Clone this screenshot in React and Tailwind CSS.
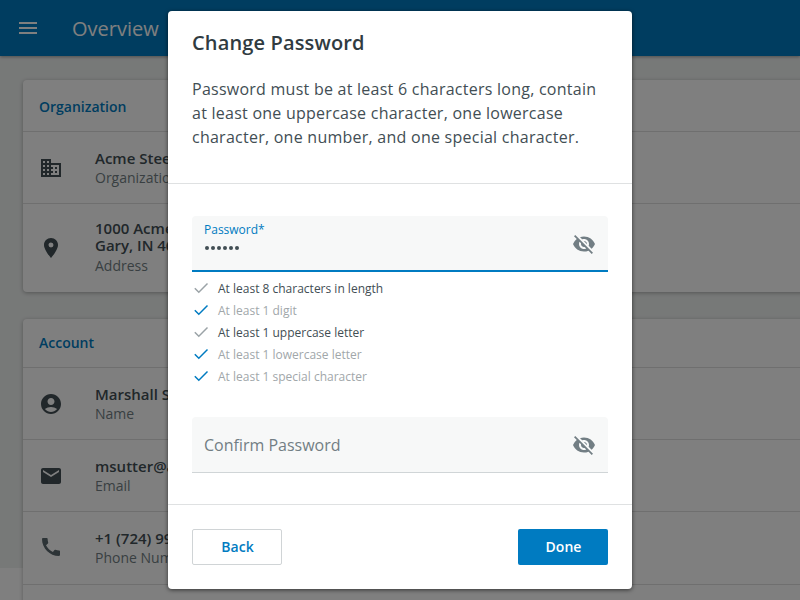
import React from "react";
import {
  MdMenu,
  MdDomain,
  MdPlace,
  MdAccountCircle,
  MdEmail,
  MdCall,
  MdVisibilityOff,
} from "react-icons/md";

function InfoRow({ icon: Icon, title, label, height, iconClass = "text-[#424e54]" }) {
  return (
    <div className={`flex shrink-0 items-center border-b border-[#dfdfdf] pl-4 ${height}`}>
      <Icon className={`size-6 shrink-0 ${iconClass}`} />
      <div className="ml-8 pt-[3px] whitespace-pre">
        <div className="mb-[2px] text-[15px] leading-4 font-semibold text-[#424e54]">{title}</div>
        <div className="text-[14px] leading-5 text-[#727e84]">{label}</div>
      </div>
    </div>
  );
}

function CardTitle({ children, height }) {
  return (
    <div className={`flex items-center border-b border-[#dfdfdf] pl-4 text-[14px] font-semibold text-[#007bc1] ${height}`}>
      {children}
    </div>
  );
}

function Tick({ met }) {
  return (
    <svg
      viewBox="0 0 18 18"
      fill="none"
      strokeWidth="1.5"
      className={`mb-[2px] size-[18px] shrink-0 ${met ? "stroke-[#007bc1]" : "stroke-[#9ba3a7]"}`}
    >
      <path d="M2.8 9.2 6.8 13.2 15.5 4.5" />
    </svg>
  );
}

const rules = [
  { text: "At least 8 characters in length", met: false },
  { text: "At least 1 digit", met: true },
  { text: "At least 1 uppercase letter", met: false },
  { text: "At least 1 lowercase letter", met: true },
  { text: "At least 1 special character", met: true },
];

function AccountPage() {
  return (
    <div className="h-[600px] overflow-hidden bg-white">
      <div className="h-[568px] bg-[#eff2f1]">
        <header className="relative flex h-14 items-center bg-[#007bc1] pl-4 text-white shadow-[0_1px_3px_rgba(0,0,0,0.35)]">
          <MdMenu className="size-6" />
          <h1 className="ml-8 pt-[2px] text-[20px] leading-7">Overview</h1>
        </header>
        <main className="flex flex-col gap-[27px] pt-6 pl-[23px]">
          <section className="h-[212px] w-[800px] overflow-visible rounded bg-white shadow-[0_1px_4px_rgba(0,0,0,0.3)]">
            <CardTitle height="h-[52px] pt-[2px]">Organization</CardTitle>
            <InfoRow icon={MdDomain} title="Acme Steel Company" label="Organization Name" height="h-[72px]" />
            <div className="flex h-[88px] items-center pl-4">
              <MdPlace className="size-6 shrink-0 text-[#424e54]" />
              <div className="ml-8">
                <div className="text-[15px] leading-[17px] font-semibold text-[#424e54]">
                  1000 Acme Way
                  <br />
                  Gary, IN 46402
                </div>
                <div className="mt-[2px] text-[14px] leading-5 text-[#727e84]">Address</div>
              </div>
            </div>
          </section>
          <section className="w-[800px] rounded bg-white shadow-[0_1px_4px_rgba(0,0,0,0.3)]">
            <CardTitle height="h-[49px] pb-[2px]">Account</CardTitle>
            <InfoRow icon={MdAccountCircle} title="Marshall Sutter" label="Name" height="h-[72px]" />
            <InfoRow icon={MdEmail} title="msutter@acme.com" label="Email" height="h-[72px]" />
            <InfoRow
              icon={MdCall}
              title="+1 (724) 999-0123"
              label="Phone Number"
              height="h-[73px] pb-[1px]"
              iconClass="mb-[2px] text-[#5b686e]"
            />
            <div className="h-10" />
          </section>
        </main>
      </div>
    </div>
  );
}

function PasswordDialog() {
  return (
    <div role="dialog" className="mt-[11px] flex h-[578px] w-[464px] flex-col rounded bg-white shadow-[0_1px_4px_rgba(0,0,0,0.6)]">
      <div className="h-[173px] border-b border-[#dfe1e2] px-6 pt-[18px]">
        <h2 className="text-[20px] leading-7 font-semibold tracking-[0.15px] text-[#303b41]">Change Password</h2>
        <p className="mt-5 text-[16px] leading-6 tracking-[0.25px] whitespace-nowrap text-[#424e54]">
          Password must be at least 6 characters long, contain
          <br />
          at least one uppercase character, one lowercase
          <br />
          character, one number, and one special character.
        </p>
      </div>
      <div className="h-[321px] border-b border-[#dfe1e2] px-6 pt-8">
        <div className="flex h-14 items-center justify-between rounded-t border-b-2 border-[#007bc1] bg-[#f7f8f8] px-3">
          <div className="pb-[7px]">
            <div className="text-[12px] leading-4 text-[#007bc1]">Password*</div>
            <div className="flex h-5 items-center gap-[2px] pl-[1px]">
              {[0, 1, 2, 3, 4, 5].map((dot) => (
                <span key={dot} className="size-1 rounded-full bg-[#424e54]" />
              ))}
            </div>
          </div>
          <MdVisibilityOff className="mt-[2px] size-6 text-[#727e84]" />
        </div>
        <ul className="mt-[6px]">
          {rules.map((rule) => (
            <li key={rule.text} className="flex h-[22px] items-center">
              <Tick met={rule.met} />
              <span className={`ml-2 text-[12px] ${rule.met ? "text-[#a1a7aa]" : "text-[#424e54]"}`}>{rule.text}</span>
            </li>
          ))}
        </ul>
        <div className="mt-[29px] flex h-14 items-center justify-between rounded-t border-b border-[#d0d5d7] bg-[#f7f8f8] px-3">
          <span className="text-[16px] text-[#727e84]">Confirm Password</span>
          <MdVisibilityOff className="size-6 text-[#727e84]" />
        </div>
      </div>
      <div className="flex justify-between px-6 pt-6">
        <button className="h-9 w-[90px] rounded-[2px] border border-[#d0d4d6] pb-[2px] pl-[1px] text-[14px] font-semibold text-[#007bc1]">Back</button>
        <button className="h-9 w-[90px] rounded-[2px] bg-[#007bc1] pb-[2px] pl-[1px] text-[14px] font-semibold text-white">Done</button>
      </div>
    </div>
  );
}

export default function App() {
  return (
    <div className="relative h-[600px] w-[800px] overflow-hidden font-['Open_Sans',sans-serif]">
      <AccountPage />
      <div className="absolute inset-0 flex items-start justify-center bg-black/50">
        <PasswordDialog />
      </div>
    </div>
  );
}
